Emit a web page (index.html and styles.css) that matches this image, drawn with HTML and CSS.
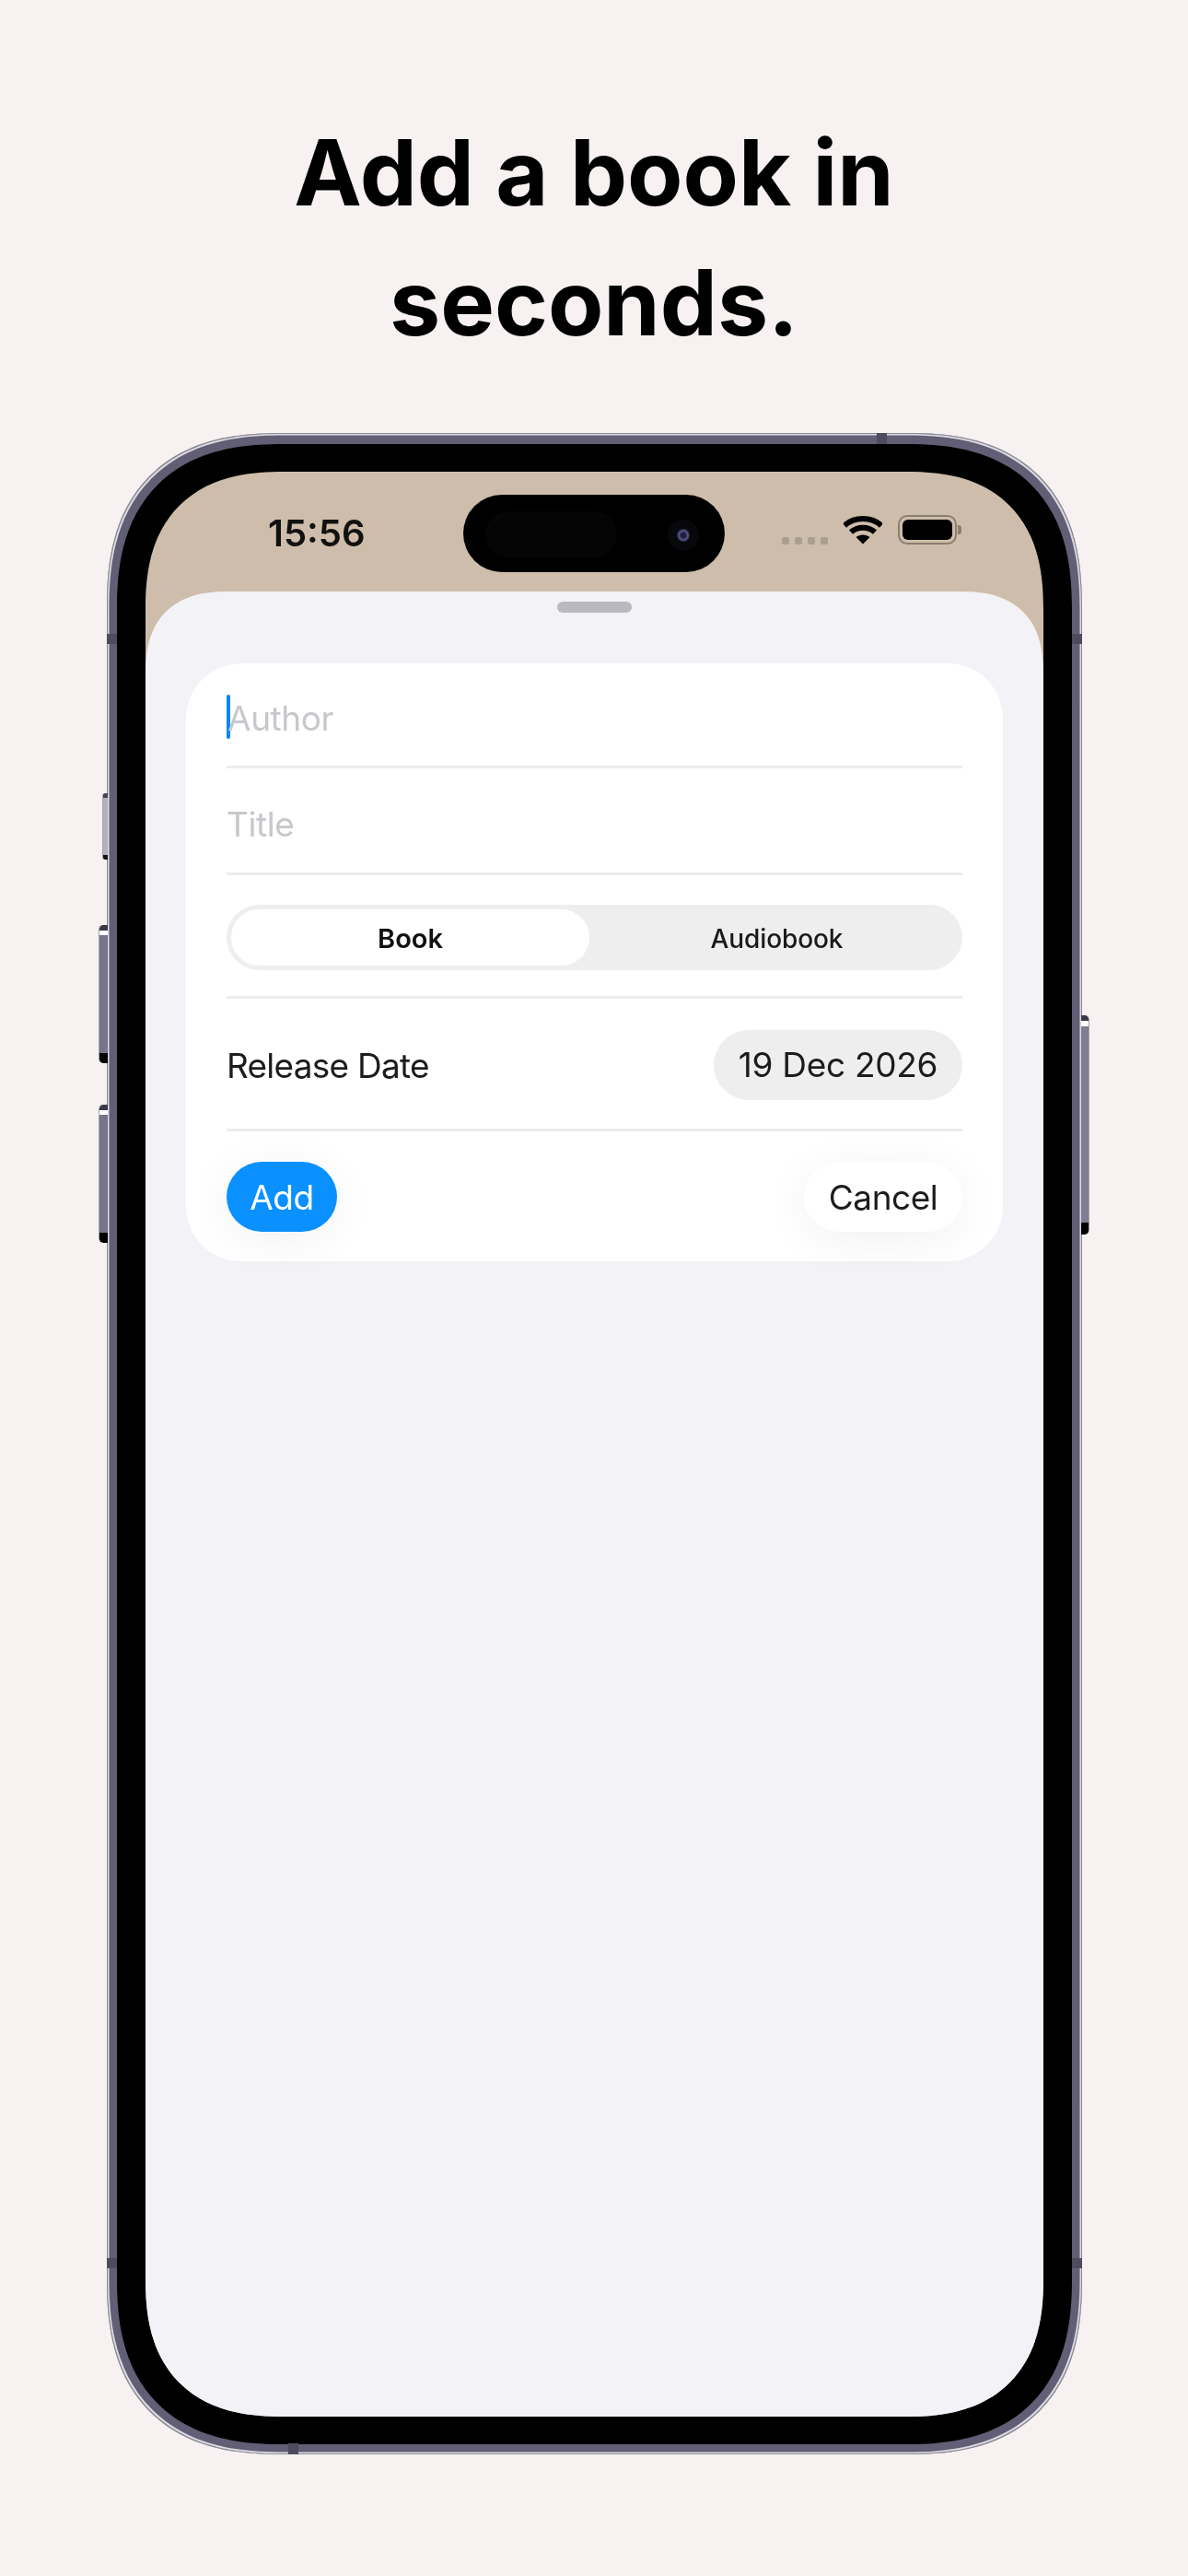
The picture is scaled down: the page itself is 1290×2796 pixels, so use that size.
FILE: index.html
```
<!DOCTYPE html>
<html lang="en">
<head>
<meta charset="utf-8">
<title>Add a book in seconds</title>
<link rel="stylesheet" href="styles.css">
</head>
<body>
<main class="page">
  <h1 class="headline">Add a book in seconds.</h1>
  <div class="phone">
    <span class="btn btn-mute"></span>
    <span class="btn btn-vol-up"></span>
    <span class="btn btn-vol-down"></span>
    <span class="btn btn-power"></span>
    <span class="band band-top"></span>
    <span class="band band-left-a"></span>
    <span class="band band-right-a"></span>
    <span class="band band-left-b"></span>
    <span class="band band-right-b"></span>
    <span class="band band-bottom"></span>
    <div class="bezel">
      <div class="screen">
        <div class="status">
          <span class="time">15:56</span>
          <div class="island">
            <span class="island-sensor"></span>
            <span class="camera"><span class="lens"></span></span>
          </div>
          <div class="signal"><i></i><i></i><i></i><i></i></div>
          <svg class="wifi" viewBox="0 0 42 32" aria-hidden="true">
            <path d="M1 11.5C11.5 1.5 30.5 1.5 41 11.5" class="arc"/>
            <path d="M8 18.5C15 12 27 12 34 18.5" class="arc"/>
            <path d="M21 31.5L13.5 24C17.5 20.5 24.5 20.5 28.5 24Z" class="wedge"/>
          </svg>
          <div class="battery"><span class="battery-body"><span class="battery-fill"></span></span><span class="battery-cap"></span></div>
        </div>
        <div class="sheet">
          <div class="grabber"></div>
          <form class="card">
            <div class="row row-field row-author"><span class="caret"></span><span class="placeholder placeholder-first">Author</span></div>
            <div class="row row-field row-title"><span class="placeholder">Title</span></div>
            <div class="row row-segment">
              <div class="segment">
                <span class="seg seg-active">Book</span>
                <span class="seg seg-idle">Audiobook</span>
              </div>
            </div>
            <div class="row row-date">
              <span class="label">Release Date</span>
              <span class="date-pill">19 Dec 2026</span>
            </div>
            <div class="actions">
              <span class="action action-add">Add</span>
              <span class="action action-cancel">Cancel</span>
            </div>
          </form>
        </div>
      </div>
    </div>
  </div>
</main>
</body>
</html>
```
FILE: styles.css
```
* { box-sizing: border-box; }
html, body { margin: 0; padding: 0; }
body { background: #f7f2f1; font-family: "Inter", "Liberation Sans", sans-serif; color: #000; }
.page { width: 1290px; height: 2796px; padding-top: 117px; display: flex; flex-direction: column; align-items: center; overflow: hidden; }
.headline { margin: 0; width: 760px; text-align: center; font-size: 98.6px; line-height: 141px; font-weight: 700; color: #000; }

.phone { position: relative; margin-top: 71px; margin-left: 1px; width: 1059px; height: 2194px; padding: 12px 11px 11px; border-radius: 190px; corner-shape: superellipse(1.3); background: #625e76; box-shadow: inset 0 0 0 1px #8a8892, inset 0 0 0 2.5px #dcdbe2; }
.bezel { height: 100%; padding: 30px 31px; border-radius: 180px; corner-shape: superellipse(1.3); background: #000; }
.screen { height: 100%; border-radius: 150px; corner-shape: superellipse(1.3); overflow: hidden; background: #cdbdaa; display: flex; flex-direction: column; }

.btn { position: absolute; border-left: 1px solid #a5a3ad; }
.btn-mute { left: -5px; top: 391px; width: 6px; height: 72px; border-radius: 3px 0 0 3px; background: linear-gradient(#45434f 0 5px, #b2b0bb 5px calc(100% - 5px), #111 calc(100% - 5px)); }
.btn-vol-up, .btn-vol-down { left: -9px; width: 10px; height: 150px; border-radius: 5px 0 0 5px; background: linear-gradient(#3a3845 0 6px, #fff 6px 11px, #77738a 11px calc(100% - 11px), #000 calc(100% - 11px)); }
.btn-vol-up { top: 534px; }
.btn-vol-down { top: 729px; }
.btn-power { right: -8px; top: 632px; width: 9px; height: 238px; border-radius: 0 5px 5px 0; border-left: 0; border-right: 1px solid #a5a3ad; background: linear-gradient(#3a3845 0 6px, #fff 6px 12px, #807c92 12px calc(100% - 13px), #000 calc(100% - 13px)); }

.band { position: absolute; background: #4e4b5c; }
.band-top { top: 0; right: 212px; width: 11px; height: 12px; }
.band-bottom { bottom: 0; left: 197px; width: 11px; height: 12px; }
.band-left-a { left: 0; top: 218px; width: 11px; height: 11px; }
.band-right-a { right: 0; top: 218px; width: 11px; height: 11px; }
.band-left-b { left: 0; top: 1981px; width: 11px; height: 11px; }
.band-right-b { right: 0; top: 1981px; width: 11px; height: 11px; }

.status { height: 130px; flex: none; display: flex; align-items: flex-start; padding-left: 133px; filter: blur(.5px); }
.time { width: 105px; margin-top: 43px; font-size: 40px; line-height: 48px; font-weight: 600; color: #111; white-space: nowrap; }
.island { position: relative; width: 284px; height: 84px; margin: 25px 0 0 107px; border-radius: 42px; background: #000; }
.island-sensor { position: absolute; left: 24px; top: 18px; width: 143px; height: 50px; border-radius: 25px; background: #050505; }
.camera { position: absolute; left: 222px; top: 27px; width: 34px; height: 34px; border-radius: 50%; background: #08080c; display: flex; align-items: center; justify-content: center; }
.lens { width: 14px; height: 14px; border-radius: 50%; background: radial-gradient(circle, #20203a 0 30%, #5a5590 45%, #15151f 80%); }
.signal { display: flex; gap: 6px; margin: 71px 0 0 62px; }
.signal i { width: 8px; height: 8px; border-radius: 2px; background: #ab9f92; }
.wifi { width: 42px; height: 32px; margin: 47px 0 0 17px; flex: none; }
.arc { fill: none; stroke: #000; stroke-width: 6; }
.wedge { fill: #000; }
.battery { display: flex; align-items: center; margin: 47px 0 0 17px; }
.battery-body { width: 64px; height: 32px; padding: 3px; border-radius: 10px; border: 2px solid #8b7f70; display: block; }
.battery-fill { display: block; height: 100%; border-radius: 6px; background: #000; }
.battery-cap { width: 4px; height: 10px; margin-left: 1px; border-radius: 0 3px 3px 0; background: #8b7f70; }

.sheet { flex: 1; border-radius: 90px 90px 0 0; corner-shape: superellipse(1.3); background: #f2f2f7; padding: 0 44px; }
.grabber { width: 81px; height: 12px; margin: 11px auto 55px; border-radius: 6px; background: #b9b9c0; }
.card { height: 649px; padding: 0 44px; border-radius: 60px; background: #fff; display: flex; flex-direction: column; filter: blur(.6px); }
.row { border-bottom: 3px solid #ececee; display: flex; align-items: center; }
.row-field { font-size: 37px; letter-spacing: -.4px; }
.row-author { height: 114px; padding-top: 4px; }
.row-title { height: 116px; padding-top: 4px; }
.row-segment { height: 134px; padding-top: 4px; }
.row-date { height: 144px; justify-content: space-between; padding-top: 2px; }
.caret { width: 4px; height: 48px; border-radius: 2px; background: #0a84ff; }
.placeholder { color: #c7c7cc; line-height: 48px; padding-top: 4px; }
.placeholder-first { margin-left: -3px; }
.segment { width: 100%; height: 71px; padding: 5px; border-radius: 36px; background: #eeeeee; display: grid; grid-template-columns: 389px 1fr; }
.seg { display: flex; align-items: center; justify-content: center; padding-top: 2px; font-size: 28px; font-weight: 500; color: #1a1a1a; border-radius: 31px; }
.seg-idle { padding-left: 7px; letter-spacing: -.1px; }
.seg-active { background: #fff; font-size: 29px; font-weight: 600; color: #111; }
.label { padding-top: 2px; font-size: 37px; letter-spacing: -.75px; color: #1c1c1e; }
.date-pill { width: 270px; height: 76px; border-radius: 38px; background: #eeeeee; display: flex; align-items: center; justify-content: center; font-size: 37px; letter-spacing: -.3px; color: #1c1c1e; }
.actions { flex: 1; display: flex; justify-content: space-between; align-items: flex-start; padding-top: 33px; }
.action { height: 76px; border-radius: 38px; display: flex; align-items: center; justify-content: center; font-size: 37px; letter-spacing: -.5px; }
.action-add { width: 120px; background: #0a90ff; color: #fff; box-shadow: 0 8px 50px rgba(0,0,0,.06); }
.action-cancel { width: 172px; background: #fff; color: #1c1c1e; box-shadow: 0 8px 50px rgba(0,0,0,.06); }
```
